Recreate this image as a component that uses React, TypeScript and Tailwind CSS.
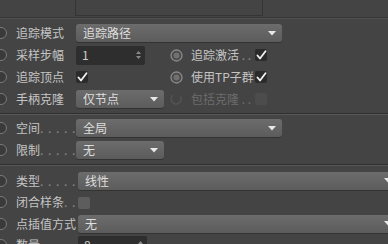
import React from 'react';

const font = { fontFamily: '"Noto Sans CJK SC", "Noto Sans", sans-serif' };

function LeftRadio() {
  return (
    <div className="w-[12px] h-[12px] -ml-[5px] mr-[9px] shrink-0 rounded-full border-[1.5px] border-[#7a7a7a] bg-[#3a3a3a]" />
  );
}

function AnimRadio({ dim = false }: { dim?: boolean }) {
  return (
    <svg width="13" height="13" viewBox="0 0 13 13" className="shrink-0">
      {dim ? (
        <path d="M10.5 3.5 A5 5 0 1 1 3 2.2" fill="none" stroke="#555" strokeWidth="1.5" />
      ) : (
        <>
          <circle cx="6.5" cy="6.5" r="5.5" fill="#4a4a4a" stroke="#8a8a8a" strokeWidth="1.3" />
          <circle cx="6.5" cy="6.5" r="3" fill="#707070" />
        </>
      )}
    </svg>
  );
}

function Check({ on = true, dim = false }: { on?: boolean; dim?: boolean }) {
  return (
    <div
      className={
        'w-[12px] h-[12px] rounded-[2px] flex items-center justify-center shrink-0 ' +
        (on ? 'bg-[#2b2b2b]' : dim ? 'bg-[#4c4c4c]' : 'bg-[#5d5d5d]')
      }
    >
      {on && (
        <svg width="11" height="10" viewBox="0 0 11 10">
          <path d="M1.5 5.5 L4 8.5 L9.5 1.2" fill="none" stroke="#f2f2f2" strokeWidth="1.8" strokeLinecap="round" strokeLinejoin="round" />
        </svg>
      )}
    </div>
  );
}

function Arrow() {
  return (
    <svg width="8" height="5" viewBox="0 0 8 5" className="shrink-0">
      <path d="M0 0 H8 L4 4.5 Z" fill="#e8e8e8" />
    </svg>
  );
}

function Dropdown({ text, w, arrow = true }: { text: string; w: string; arrow?: boolean }) {
  return (
    <div
      className={
        'h-[18px] rounded-[3px] bg-gradient-to-b from-[#6c6c6c] to-[#5c5c5c] shadow-[0_1px_0_#333] flex items-center pl-[7px] pr-[6px] text-[12px] text-[#dedede] ' +
        w
      }
    >
      <span className="flex-1 leading-none">{text}</span>
      {arrow && <Arrow />}
    </div>
  );
}

function NumField({ value }: { value: string }) {
  return (
    <div className="w-[69px] h-[19px] bg-[#2e2e2e] rounded-[2px] flex items-center pl-[6px] pr-[4px] text-[12px] text-[#cfcfcf]">
      <span className="flex-1 leading-none">{value}</span>
      <svg width="5" height="10" viewBox="0 0 5 10">
        <path d="M0 4 L2.5 1 L5 4 Z M0 6 L2.5 9 L5 6 Z" fill="#8a8a8a" />
      </svg>
    </div>
  );
}

function Label({ text, dots = '', w = 'w-[60px]' }: { text: string; dots?: string; w?: string }) {
  return (
    <div className={'shrink-0 text-[12px] text-[#c4c4c4] whitespace-nowrap leading-none ' + w}>
      {text}
      <span className="text-[#8a8a8a] tracking-[1px]">{dots}</span>
    </div>
  );
}

function Separator() {
  return <div className="h-[2px] border-t border-[#2f2f2f] border-b border-b-[#585858]" />;
}

export default function App() {
  return (
    <div className="w-[388px] h-[244px] bg-[#444444] overflow-hidden" style={font}>
      <div className="h-[16px] flex">
        <div className="ml-[75px] w-[188px] h-[16px] border-l border-r border-b border-[#353535]" />
      </div>
      <div className="h-[2px] mt-[1px] border-t border-[#363636] border-b border-b-[#505050]" />

      <div className="pt-[3px]">
        <div className="h-[22px] flex items-center">
          <LeftRadio />
          <Label text="追踪模式" />
          <Dropdown text="追踪路径" w="w-[206px]" />
        </div>
        <div className="h-[22px] flex items-center">
          <LeftRadio />
          <Label text="采样步幅" />
          <NumField value="1" />
          <div className="ml-[25px] flex items-center">
            <AnimRadio />
            <div className="ml-[8px] w-[64px] text-[12px] text-[#c4c4c4] leading-none whitespace-nowrap">
              追踪激活<span className="text-[#8a8a8a]"> . .</span>
            </div>
            <Check />
          </div>
        </div>
        <div className="h-[22px] flex items-center">
          <LeftRadio />
          <Label text="追踪顶点" />
          <div className="w-[69px]">
            <Check />
          </div>
          <div className="ml-[25px] flex items-center">
            <AnimRadio />
            <div className="ml-[8px] w-[64px] text-[12px] text-[#c4c4c4] leading-none whitespace-nowrap">使用TP子群</div>
            <Check />
          </div>
        </div>
        <div className="h-[22px] flex items-center">
          <LeftRadio />
          <Label text="手柄克隆" />
          <Dropdown text="仅节点" w="w-[88px]" />
          <div className="ml-[6px] flex items-center">
            <AnimRadio dim />
            <div className="ml-[8px] w-[64px] text-[12px] text-[#6c6c6c] leading-none whitespace-nowrap">包括克隆 . .</div>
            <Check on={false} dim />
          </div>
        </div>
      </div>

      <div className="mt-[3px]">
        <Separator />
      </div>

      <div className="pt-[2px]">
        <div className="h-[22px] flex items-center">
          <LeftRadio />
          <Label text="空间" dots=". . . . ." />
          <Dropdown text="全局" w="w-[206px]" />
        </div>
        <div className="h-[22px] flex items-center">
          <LeftRadio />
          <Label text="限制" dots=". . . . ." />
          <Dropdown text="无" w="w-[88px]" />
        </div>
      </div>

      <div className="mt-[3px]">
        <Separator />
      </div>

      <div className="pt-[4px]">
        <div className="h-[21px] flex items-center">
          <LeftRadio />
          <Label text="类型" dots=". . . . . ." w="w-[62px]" />
          <Dropdown text="线性" w="w-[320px] shrink-0" />
        </div>
        <div className="h-[22px] flex items-center">
          <LeftRadio />
          <Label text="闭合样条" dots=". . ." w="w-[62px]" />
          <div className="pt-[1px]">
            <Check on={false} />
          </div>
        </div>
        <div className="h-[21px] flex items-center">
          <LeftRadio />
          <Label text="点插值方式" w="w-[62px]" />
          <Dropdown text="无" w="w-[320px] shrink-0" />
        </div>
        <div className="h-[22px] flex items-center">
          <LeftRadio />
          <Label text="数量" w="w-[62px]" />
          <NumField value="8" />
        </div>
      </div>
    </div>
  );
}
